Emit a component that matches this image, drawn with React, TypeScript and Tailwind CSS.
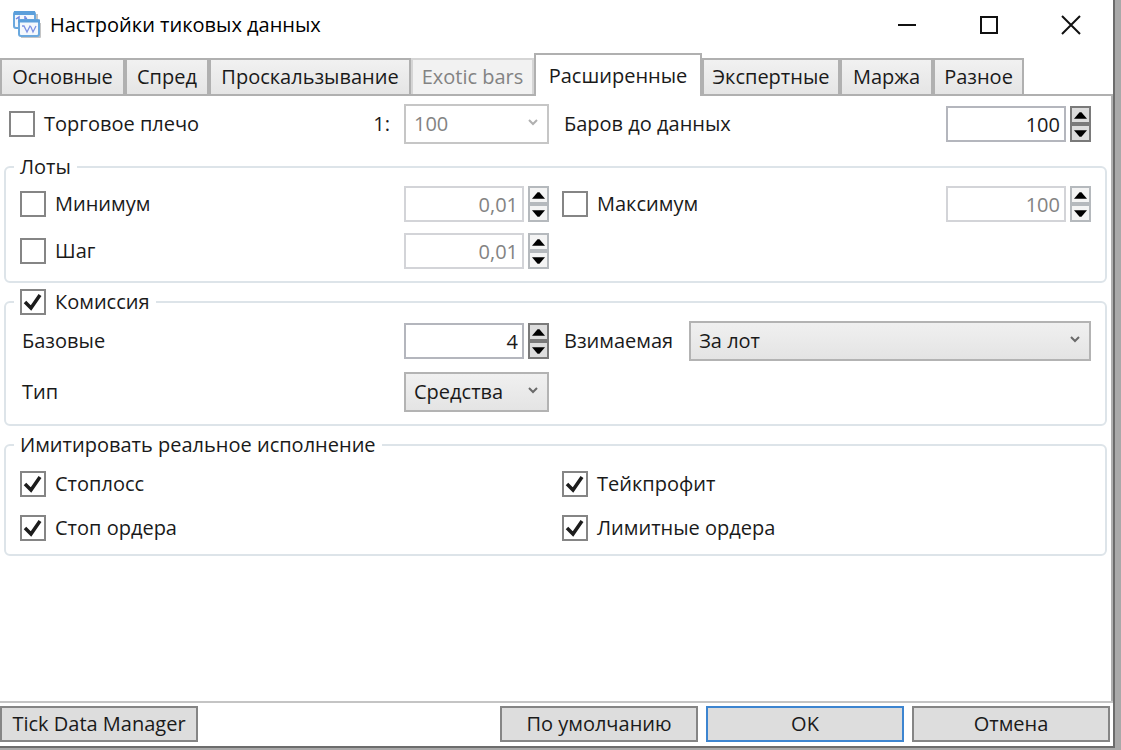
import React, { useState } from 'react';

interface TabItem {
  id: string;
  label: string;
  width: string;
  disabled?: boolean;
}

const TABS: TabItem[] = [
  { id: 'main', label: 'Основные', width: 'w-[125px]' },
  { id: 'spread', label: 'Спред', width: 'w-[84px]' },
  { id: 'slippage', label: 'Проскальзывание', width: 'w-[202px]' },
  { id: 'exotic', label: 'Exotic bars', width: 'w-[123px]', disabled: true },
  { id: 'advanced', label: 'Расширенные', width: 'w-[168px]' },
  { id: 'expert', label: 'Экспертные', width: 'w-[138px]' },
  { id: 'margin', label: 'Маржа', width: 'w-[93px]' },
  { id: 'misc', label: 'Разное', width: 'w-[91px]' }
];

const AppIcon: React.FC = () => (
  <svg width="30" height="30" viewBox="0 0 30 30" fill="none" aria-hidden="true">
    <path d="M25 4v7M28 13v14H9" stroke="#c4c4c4" strokeWidth="2" strokeLinejoin="round" />
    <rect x="2" y="2" width="21" height="16" rx="2" fill="#f4f8fd" stroke="#6aa8de" strokeWidth="2" />
    <path d="M2 3h21" stroke="#5b9fdb" strokeWidth="4" />
    <path d="M4 9l3-2v3M13 6v3l2-1" stroke="#6f86e0" strokeWidth="1.5" />
    <rect x="7" y="10" width="20" height="16" rx="2" fill="#f4f8fd" stroke="#6aa8de" strokeWidth="2" />
    <path d="M6 11h22" stroke="#5b9fdb" strokeWidth="3" />
    <path d="M10 16h2l3 6 3-6 1 1 2 5 3-6" stroke="#7d92e4" strokeWidth="1.3" />
  </svg>
);

interface CheckProps {
  label: string;
  defaultChecked?: boolean;
}

const Check: React.FC<CheckProps> = ({ label, defaultChecked }) => (
  <label className="flex items-center gap-[9px]">
    <span className="grid">
      <input
        type="checkbox"
        defaultChecked={defaultChecked}
        className="peer col-start-1 row-start-1 size-[26px] appearance-none border-2 border-[#858585] bg-white"
      />
      <svg
        viewBox="0 0 26 26"
        className="pointer-events-none invisible col-start-1 row-start-1 size-[26px] peer-checked:visible"
        fill="none"
        aria-hidden="true"
      >
        <path d="M5 13l6 6L20 6" stroke="#1c1c1c" strokeWidth="3.5" />
      </svg>
    </span>
    {label}
  </label>
);

interface SpinnerProps {
  label: string;
  value: string;
  disabled?: boolean;
}

const Spinner: React.FC<SpinnerProps> = ({ label, value, disabled }) => {
  const button = disabled
    ? 'flex h-[18px] items-center justify-center border-2 border-[#b5b9bd] bg-[#f4f4f4]'
    : 'flex h-[18px] items-center justify-center border-2 border-[#7a7a7a] bg-[#dddddd]';

  return (
    <div className="flex shrink-0 gap-1">
      <input
        type="text"
        aria-label={label}
        defaultValue={value}
        disabled={disabled}
        className="h-9 w-[120px] border-2 border-[#b4b6bd] bg-white px-1 text-right disabled:border-[#d3d4d8] disabled:text-[#838383]"
      />
      <div className="flex w-[21px] flex-col">
        <button type="button" aria-label="+" disabled={disabled} className={button}>
          <svg width="13" height="7" viewBox="0 0 14 7" aria-hidden="true">
            <path d="M0 7L6 0h2l6 7z" fill="#000" />
          </svg>
        </button>
        <button type="button" aria-label="-" disabled={disabled} className={button}>
          <svg width="13" height="7" viewBox="0 0 14 7" aria-hidden="true">
            <path d="M0 0l6 7h2l6-7z" fill="#000" />
          </svg>
        </button>
      </div>
    </div>
  );
};

interface DropDownProps {
  label: string;
  value: string;
  wide?: boolean;
  disabled?: boolean;
}

const DropDown: React.FC<DropDownProps> = ({ label, value, wide, disabled }) => (
  <div className={wide ? 'grid flex-1 items-center' : 'grid w-[145px] shrink-0 items-center'}>
    <select
      aria-label={label}
      disabled={disabled}
      className="col-start-1 row-start-1 h-10 w-full appearance-none border-2 border-[#b3b3b3] bg-linear-to-b from-[#f0f0f0] to-[#e4e4e4] px-2 disabled:border-[#c6c6c6] disabled:bg-white disabled:bg-none disabled:text-[#838383] disabled:opacity-100"
    >
      <option>{value}</option>
    </select>
    <svg
      width="12"
      height="8"
      viewBox="0 0 12 8"
      className="pointer-events-none col-start-1 row-start-1 mr-[10px] mb-1 justify-self-end"
      fill="none"
      aria-hidden="true"
    >
      <path d="M2 2l4 4 4-4" stroke={disabled ? '#b0b0b0' : '#6a6a6a'} strokeWidth="2" />
    </svg>
  </div>
);

interface GroupProps {
  legend: React.ReactNode;
  children: React.ReactNode;
}

const Group: React.FC<GroupProps> = ({ legend, children }) => (
  <fieldset className="mx-1 min-w-0 rounded-md border-2 border-[#dde4e9] px-2">
    <legend className="px-[6px]">{legend}</legend>
    {children}
  </fieldset>
);

export default function App() {
  const [active, setActive] = useState('advanced');

  return (
    <div className="flex h-screen flex-col bg-[#a9a9a9] pr-[6px] pb-[2px] font-['Open_Sans','Noto_Sans',sans-serif] text-[20px] leading-7 text-[#1a1a1a]">
      <div className="flex min-h-0 flex-1 flex-col border-r-2 border-b-2 border-[#6c6c6c] bg-white">
        <header className="flex h-[53px] items-center gap-2 pb-1 pl-3">
          <AppIcon />
          <h1 className="flex-1 text-black">Настройки тиковых данных</h1>
          <div className="flex items-center gap-[62px] pr-8">
            <button type="button" aria-label="Свернуть">
              <svg width="20" height="20" viewBox="0 0 20 20" fill="none" stroke="#111" strokeWidth="2">
                <path d="M1 10h18" />
              </svg>
            </button>
            <button type="button" aria-label="Развернуть">
              <svg width="20" height="20" viewBox="0 0 20 20" fill="none" stroke="#111" strokeWidth="2">
                <path d="M2 2h16v16H2z" />
              </svg>
            </button>
            <button type="button" aria-label="Закрыть">
              <svg width="20" height="20" viewBox="0 0 20 20" fill="none" stroke="#111" strokeWidth="2">
                <path d="M1 1l18 18M19 1L1 19" />
              </svg>
            </button>
          </div>
        </header>

        <div role="tablist" className="flex items-end whitespace-nowrap">
          {TABS.map((tab) => (
            <button
              key={tab.id}
              type="button"
              role="tab"
              aria-selected={active === tab.id}
              disabled={tab.disabled}
              onClick={() => setActive(tab.id)}
              className={`${tab.width} ${
                active === tab.id
                  ? 'z-10 -mb-[2px] h-[43px] border-2 border-b-0 border-[#b0b0b0] bg-white'
                  : 'h-9 border-2 border-b-0 border-[#b0b0b0] bg-linear-to-b from-[#f1f1f1] to-[#e5e5e5] disabled:border-[#d5d5d5] disabled:bg-[#f2f2f2] disabled:bg-none disabled:text-[#838383]'
              }`}
            >
              {tab.label}
            </button>
          ))}
        </div>

        <main className="flex-1 border-t-2 border-r-2 border-[#b0b0b0]">
          <div className="grid grid-cols-[540fr_529fr] gap-[13px] pt-2 pr-5 pl-[9px]">
            <div className="flex items-center">
              <Check label="Торговое плечо" />
              <span className="mr-[14px] ml-auto">1:</span>
              <DropDown label="Торговое плечо 1:" value="100" disabled />
            </div>
            <div className="flex items-center justify-between pl-[2px]">
              <span>Баров до данных</span>
              <Spinner label="Баров до данных" value="100" />
            </div>
          </div>

          <div className="mt-[9px] flex flex-col gap-[5px]">
            <Group legend="Лоты">
              <div className="grid grid-cols-2 gap-x-[13px] gap-y-[11px] px-[6px] pt-[5px] pb-3">
                <div className="flex items-center justify-between">
                  <Check label="Минимум" />
                  <Spinner label="Минимум" value="0,01" disabled />
                </div>
                <div className="flex items-center justify-between">
                  <Check label="Максимум" />
                  <Spinner label="Максимум" value="100" disabled />
                </div>
                <div className="flex items-center justify-between">
                  <Check label="Шаг" />
                  <Spinner label="Шаг" value="0,01" disabled />
                </div>
              </div>
            </Group>

            <Group legend={<Check label="Комиссия" defaultChecked />}>
              <div className="grid grid-cols-2 gap-x-[13px] gap-y-[11px] px-[6px] pt-[5px] pb-3">
                <div className="flex items-center justify-between pl-[2px]">
                  <span>Базовые</span>
                  <Spinner label="Базовые" value="4" />
                </div>
                <div className="flex items-center gap-4 pl-[2px]">
                  <span>Взимаемая</span>
                  <DropDown label="Взимаемая" value="За лот" wide />
                </div>
                <div className="flex items-center justify-between pl-[2px]">
                  <span>Тип</span>
                  <DropDown label="Тип" value="Средства" />
                </div>
              </div>
            </Group>

            <Group legend="Имитировать реальное исполнение">
              <div className="grid grid-cols-2 gap-x-[13px] gap-y-4 px-[6px] pt-[11px] pb-3">
                <Check label="Стоплосс" defaultChecked />
                <Check label="Тейкпрофит" defaultChecked />
                <Check label="Стоп ордера" defaultChecked />
                <Check label="Лимитные ордера" defaultChecked />
              </div>
            </Group>
          </div>
        </main>

        <footer className="flex gap-2 border-t-2 border-[#c4c4c4] pt-[3px] pr-[3px] pb-1">
          <button type="button" className="h-9 w-[198px] border-2 border-[#858585] bg-[#dddddd] whitespace-nowrap">
            Tick Data Manager
          </button>
          <button type="button" className="ml-auto h-9 w-[198px] border-2 border-[#858585] bg-[#dddddd]">
            По умолчанию
          </button>
          <button type="button" className="h-9 w-[198px] border-2 border-[#3d85d0] bg-[#dddddd]">
            OK
          </button>
          <button type="button" className="h-9 w-[198px] border-2 border-[#858585] bg-[#dddddd]">
            Отмена
          </button>
        </footer>
      </div>
    </div>
  );
}
